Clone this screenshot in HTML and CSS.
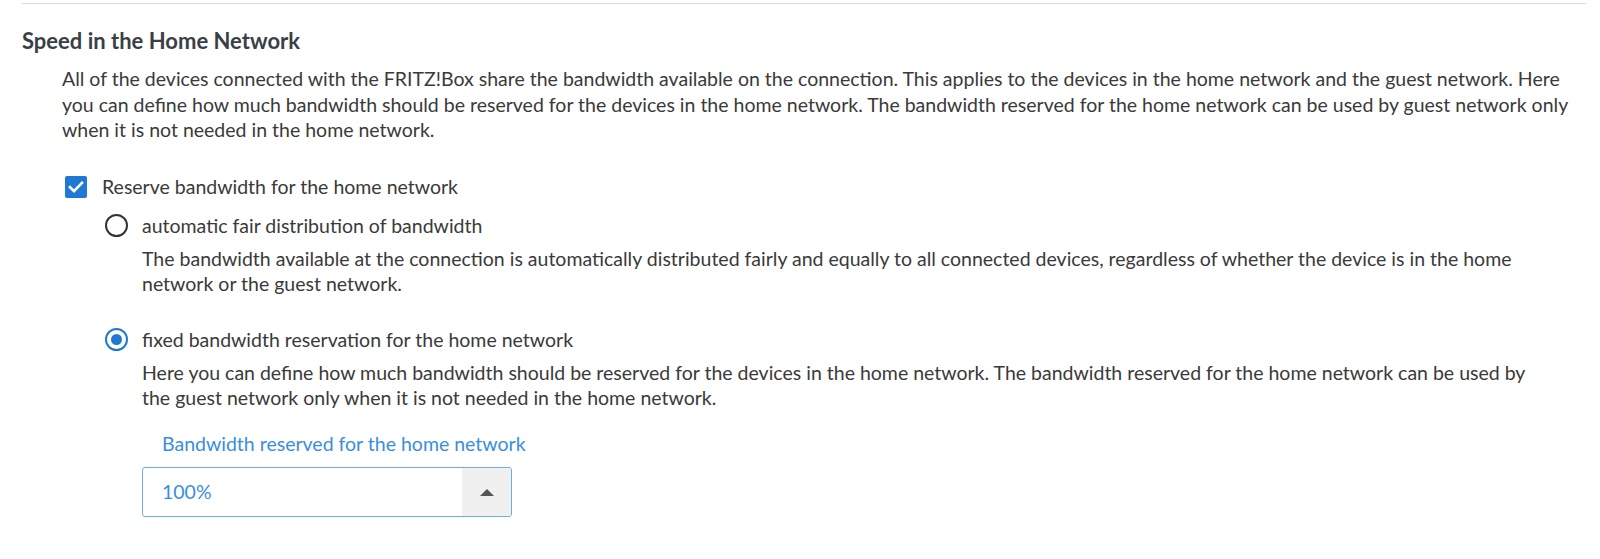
FILE: index.html
```html
<!DOCTYPE html>
<html lang="en">
<head>
<meta charset="utf-8">
<title>Speed in the Home Network</title>
<link rel="stylesheet" href="styles.css">
</head>
<body>
<div class="page">
  <hr class="rule">
  <section class="section">
    <h2 class="title">Speed in the Home Network</h2>
    <p class="intro">All of the devices connected with the FRITZ!Box share the bandwidth available on the connection. This applies to the devices in the home network and the guest network. Here you can define how much bandwidth should be reserved for the devices in the home network. The bandwidth reserved for the home network can be used by guest network only when it is not needed in the home network.</p>

    <div class="check-row">
      <span class="checkbox">
        <svg viewBox="0 0 22 22" width="22" height="22"><path d="M5 11.2l4 4 8-8.4" fill="none" stroke="#fff" stroke-width="2.6" stroke-linecap="square"/></svg>
      </span>
      <span class="check-label">Reserve bandwidth for the home network</span>
    </div>

    <div class="options">
      <div class="radio-row">
        <span class="radio"></span>
        <span class="radio-label">automatic fair distribution of bandwidth</span>
      </div>
      <p class="desc">The bandwidth available at the connection is automatically distributed fairly and equally to all connected devices, regardless of whether the device is in the home network or the guest network.</p>

      <div class="radio-row second">
        <span class="radio checked"></span>
        <span class="radio-label">fixed bandwidth reservation for the home network</span>
      </div>
      <p class="desc">Here you can define how much bandwidth should be reserved for the devices in the home network. The bandwidth reserved for the home network can be used by the guest network only when it is not needed in the home network.</p>

      <div class="field">
        <label class="field-label">Bandwidth reserved for the home network</label>
        <div class="select">
          <span class="select-value">100%</span>
          <span class="select-arrow"><svg viewBox="0 0 14 8" width="14" height="8"><path d="M0 8L7 1l7 7z" fill="#555"/></svg></span>
        </div>
      </div>
    </div>
  </section>
</div>
</body>
</html>
```

FILE: styles.css
```css
html, body {
  margin: 0;
  padding: 0;
  background: #fff;
}
body {
  font-family: "Lato", "Open Sans", sans-serif;
  color: #3a3a3a;
  font-size: 19.5px;
}
.page {
  padding: 3px 14px 0 22px;
}
.rule {
  border: 0;
  border-top: 1px solid #dcdcdc;
  margin: 0;
}
.section {
  padding-top: 24px;
}
.title {
  margin: 0;
  font-size: 22px;
  font-weight: bold;
  color: #3a3f47;
  line-height: 26px;
}
.intro {
  margin: 12px 0 0 40px;
  line-height: 25.5px;
}
.check-row {
  display: flex;
  align-items: center;
  gap: 15px;
  margin: 31px 0 0 43px;
  line-height: 26px;
}
.checkbox {
  width: 22px;
  height: 22px;
  background: #1f78d4;
  border-radius: 2px;
  display: flex;
  align-items: center;
  justify-content: center;
}
.checkbox svg { display: block; }
.options {
  margin-left: 83px;
}
.radio-row {
  display: flex;
  align-items: center;
  gap: 14px;
  margin-top: 13px;
  line-height: 26px;
}
.radio-row.second {
  margin-top: 30px;
}
.radio {
  box-sizing: border-box;
  width: 23px;
  height: 23px;
  border: 2px solid #333;
  border-radius: 50%;
  display: flex;
  align-items: center;
  justify-content: center;
}
.radio.checked {
  border-color: #1f78d4;
}
.radio.checked::after {
  content: "";
  width: 11px;
  height: 11px;
  border-radius: 50%;
  background: #1f78d4;
}
.desc {
  margin: 7px 0 0 37px;
  max-width: 1403px;
  line-height: 25.5px;
}
.field {
  margin: 20px 0 0 37px;
}
.field-label {
  display: block;
  color: #3a8ee0;
  padding-left: 20px;
  line-height: 26px;
}
.select {
  margin-top: 10px;
  box-sizing: border-box;
  width: 370px;
  height: 50px;
  border: 1px solid #6aaeea;
  border-radius: 3px;
  display: flex;
  overflow: hidden;
}
.select-value {
  flex: 1;
  display: flex;
  align-items: center;
  padding-left: 19px;
  color: #3a8ee0;
}
.select-arrow {
  width: 49px;
  background: #f0f0f0;
  display: flex;
  align-items: center;
  justify-content: center;
}
.select-arrow svg { display: block; }
```
